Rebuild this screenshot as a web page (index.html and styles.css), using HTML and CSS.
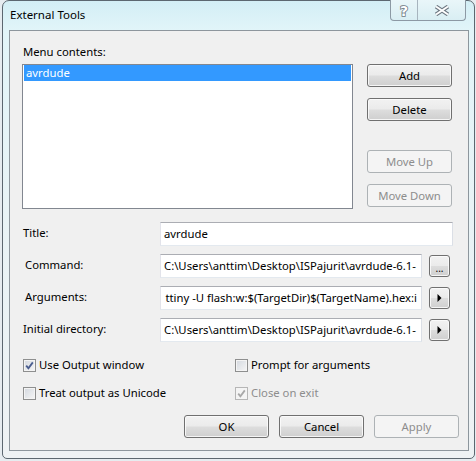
FILE: index.html
```html
<!DOCTYPE html>
<html>
<head>
<meta charset="utf-8">
<title>External Tools</title>
<link rel="stylesheet" href="styles.css">
</head>
<body>
<div class="window">
  <div class="titlebar">
    <span class="title">External Tools</span>
    <div class="caption">
      <span class="cap cap-help"><svg width="14" height="18" viewBox="0 0 14 18"><text x="7" y="15" text-anchor="middle" class="help-glyph">?</text></svg></span>
      <span class="cap cap-close"><svg width="16" height="11" viewBox="0 0 16 11"><path d="M2 1.5 L14 9.5 M14 1.5 L2 9.5" class="x-outer"/><path d="M2 1.5 L14 9.5 M14 1.5 L2 9.5" class="x-inner"/></svg></span>
    </div>
  </div>
  <div class="client">
    <div class="menu-section">
      <div class="menu-label">Menu contents:</div>
      <div class="listbox"><div class="list-item selected">avrdude</div></div>
      <div class="side-buttons">
        <button class="btn">Add</button>
        <button class="btn">Delete</button>
        <button class="btn btn-gap" disabled>Move Up</button>
        <button class="btn" disabled>Move Down</button>
      </div>
    </div>
    <div class="fields">
      <div class="field-label">Title:</div>
      <div class="textbox textbox-wide">avrdude</div>

      <div class="field-label indent">Command:</div>
      <div class="textbox">C:\Users\anttim\Desktop\ISPajurit\avrdude-6.1-</div>
      <button class="btn btn-small"><span class="dots">...</span></button>

      <div class="field-label indent">Arguments:</div>
      <div class="textbox textbox-end"><span>ttiny -U flash:w:$(TargetDir)$(TargetName).hex:i</span></div>
      <button class="btn btn-small"><svg width="5" height="8" viewBox="0 0 5 8"><path d="M0.5 0 L4.5 4 L0.5 8 Z" fill="#000"/></svg></button>

      <div class="field-label">Initial directory:</div>
      <div class="textbox">C:\Users\anttim\Desktop\ISPajurit\avrdude-6.1-</div>
      <button class="btn btn-small"><svg width="5" height="8" viewBox="0 0 5 8"><path d="M0.5 0 L4.5 4 L0.5 8 Z" fill="#000"/></svg></button>
    </div>
    <div class="options">
      <div class="check"><span class="box"><svg width="11" height="11" viewBox="0 0 11 11"><path d="M2.2 5.6 L4.4 8.2 L8.8 2.4" class="tick"/></svg></span><span>Use Output window</span></div>
      <div class="check"><span class="box"></span><span>Prompt for arguments</span></div>
      <div class="check"><span class="box"></span><span>Treat output as Unicode</span></div>
      <div class="check disabled"><span class="box"><svg width="11" height="11" viewBox="0 0 11 11"><path d="M2.2 5.6 L4.4 8.2 L8.8 2.4" class="tick"/></svg></span><span>Close on exit</span></div>
    </div>
    <div class="footer">
      <button class="btn">OK</button>
      <button class="btn">Cancel</button>
      <button class="btn" disabled>Apply</button>
    </div>
  </div>
</div>
</body>
</html>
```

FILE: styles.css
```css
* { box-sizing: border-box; }
html, body { margin: 0; }
body {
  width: 476px;
  height: 461px;
  overflow: hidden;
  padding: 0 0 0 2px;
  background: #e6ecf0;
  font-family: "Noto Sans", "Open Sans", sans-serif;
  font-size: 11.3px;
  color: #000;
}
.window {
  width: 473px;
  height: 459px;
  border: 1px solid #5c6770;
  border-radius: 7px 7px 5px 5px;
  background: linear-gradient(180deg, #d3eef5 0px, #e2f5f9 30px, #e8f3f6 200px, #eef2f4 100%);
  display: flex;
  flex-direction: column;
  padding: 0 5px 7px 6px;
}
.titlebar {
  height: 29px;
  display: flex;
  justify-content: space-between;
  align-items: flex-start;
}
.title {
  padding: 6px 0 0 1px;
  line-height: 16px;
  font-size: 11.5px;
}
.caption {
  display: flex;
  height: 21px;
  margin: -1px 3px 0 0;
  border: 1px solid #8c99a4;
  border-top: none;
  border-radius: 0 0 4px 4px;
  background: linear-gradient(180deg, #e9f6f9, #d9eef3);
}
.cap {
  display: flex;
  align-items: center;
  justify-content: center;
}
.cap-help { width: 27px; border-right: 1px solid #a7b4be; }
.cap-close { width: 47px; }
.help-glyph {
  font-family: "DejaVu Sans", sans-serif;
  font-weight: bold;
  font-size: 14px;
  fill: #fff;
  stroke: #6d7882;
  stroke-width: 1.6px;
  paint-order: stroke;
}
.x-outer { stroke: #6d7882; stroke-width: 4; fill: none; }
.x-inner { stroke: #fff; stroke-width: 2; fill: none; }

.client {
  height: 421px;
  border: 1px solid #8d969d;
  background: #f0f0f0;
  display: flex;
  flex-direction: column;
}
.menu-section {
  display: grid;
  grid-template-columns: 331px 85px;
  grid-template-rows: 16px 145px;
  column-gap: 14px;
  row-gap: 4px;
  margin: 13px 0 0 12px;
}
.menu-label {
  grid-column: 1 / 3;
  padding-left: 1px;
  line-height: 16px;
}
.listbox {
  border: 1px solid #828790;
  background: #fff;
  padding: 0 1px;
}
.list-item {
  height: 16px;
  line-height: 16px;
  padding-left: 2px;
}
.list-item.selected { background: #3399ff; color: #fff; }
.side-buttons {
  display: flex;
  flex-direction: column;
  gap: 11px;
}
.btn-gap { margin-top: 18px; }

.btn {
  width: 85px;
  height: 23px;
  padding: 0;
  border: 1px solid #707070;
  border-radius: 3px;
  background: linear-gradient(180deg, #f2f2f2 0%, #ebebeb 48%, #dddddd 52%, #cfcfcf 100%);
  box-shadow: inset 0 0 0 1px rgba(252, 252, 252, 0.85);
  font: inherit;
  color: #000;
  line-height: 19px;
}
.btn:disabled {
  border-color: #adb2b5;
  background: #f4f4f4;
  box-shadow: none;
  color: #8d8d8d;
}

.fields {
  display: grid;
  grid-template-columns: 137px 262px 7px 21px;
  grid-auto-rows: 24px;
  row-gap: 8px;
  margin: 13px 0 0 13px;
}
.field-label {
  grid-column: 1;
  align-self: center;
  line-height: 16px;
  padding-bottom: 2px;
}
.field-label.indent { padding-left: 2px; }
.textbox {
  grid-column: 2;
  height: 24px;
  border: 1px solid;
  border-color: #abadb3 #dbdfe6 #e3e9ef #e2e3ea;
  background: #fff;
  padding: 0 4px 0 3px;
  line-height: 22px;
  white-space: nowrap;
  overflow: hidden;
}
.textbox-wide { grid-column: 2 / 5; width: 293px; }
.textbox-end { display: flex; justify-content: flex-end; }
.textbox-end span { flex-shrink: 0; }
.btn-small {
  grid-column: 4;
  width: 21px;
  height: 22px;
  align-self: center;
  display: flex;
  align-items: center;
  justify-content: center;
}
.dots { font-size: 10px; line-height: 10px; padding-top: 3px; }

.options {
  display: grid;
  grid-template-columns: 212px auto;
  row-gap: 12px;
  margin: 15px 0 0 13px;
}
.check {
  display: flex;
  align-items: center;
  gap: 3px;
  line-height: 16px;
  height: 16px;
}
.box {
  width: 13px;
  height: 13px;
  border: 1px solid #8e8f8f;
  background: linear-gradient(135deg, #d3d8df 0%, #f6f6f6 100%);
  box-shadow: inset 0 0 0 1px #f4f4f4;
  display: flex;
  align-items: center;
  justify-content: center;
}
.tick { fill: none; stroke: #4a5d8f; stroke-width: 1.8; }
.check.disabled { color: #8d8d8d; }
.check.disabled .box { border-color: #b6b6b6; background: #f4f4f4; }
.check.disabled .tick { stroke: #a8a8a8; }

.footer {
  display: flex;
  justify-content: flex-end;
  gap: 10px;
  margin: 14px 9px 0 0;
}
```
